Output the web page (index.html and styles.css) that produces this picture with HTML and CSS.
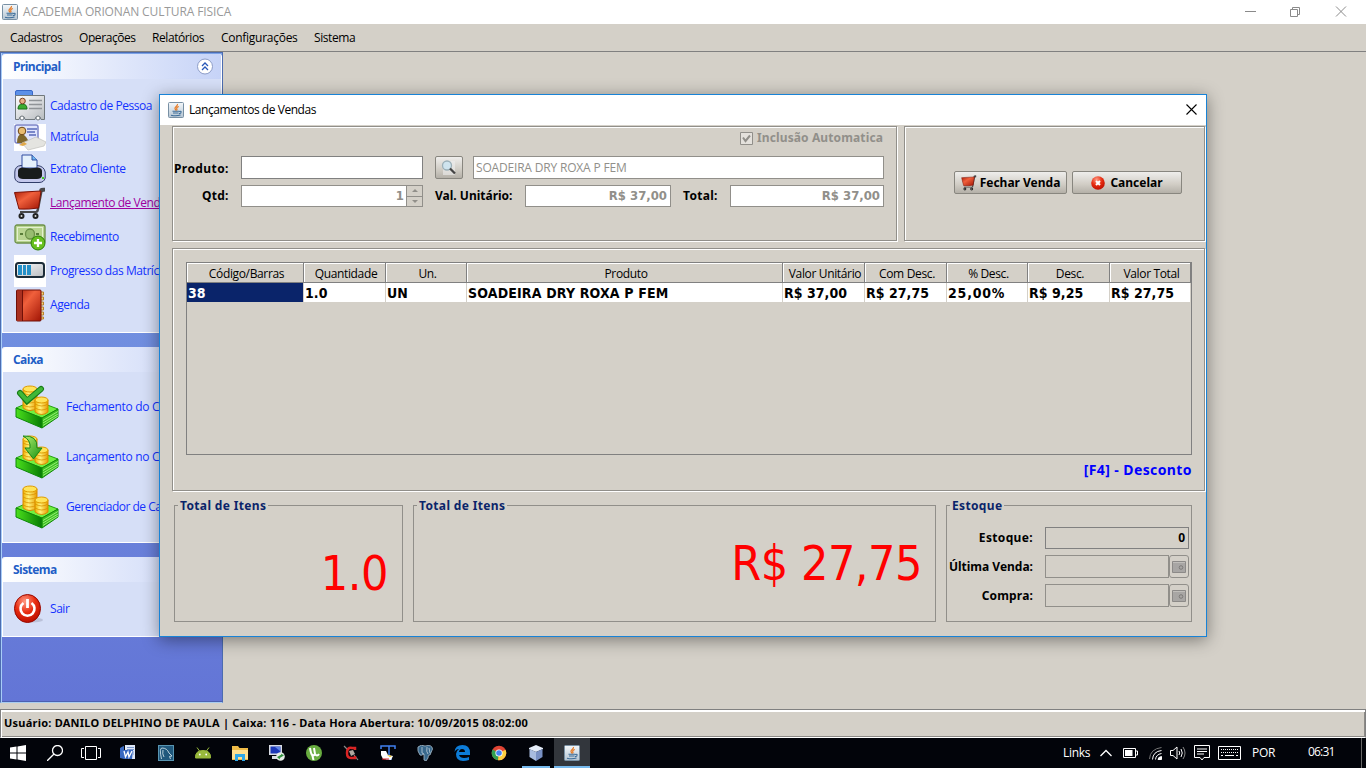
FILE: index.html
```html
<!DOCTYPE html>
<html lang="pt-BR">
<head>
<meta charset="utf-8">
<title>ACADEMIA ORIONAN CULTURA FISICA</title>
<link rel="stylesheet" href="styles.css">
</head>
<body>
<svg class="defs" width="0" height="0">
  <defs>
    <linearGradient id="gRed" x1="0" y1="0" x2="1" y2="1"><stop offset="0" stop-color="#a81c08"/><stop offset=".4" stop-color="#f0603c"/><stop offset="1" stop-color="#a01404"/></linearGradient>
    <linearGradient id="gGold" x1="0" x2="1"><stop offset="0" stop-color="#f0b000"/><stop offset=".4" stop-color="#fff27a"/><stop offset="1" stop-color="#e89a00"/></linearGradient>
    <linearGradient id="gGreen" x1="0" x2="1"><stop offset="0" stop-color="#4be01c"/><stop offset="1" stop-color="#067a04"/></linearGradient>
    <linearGradient id="gArrow" x1="0" y1="0" x2="1" y2="1"><stop offset="0" stop-color="#b4f070"/><stop offset="1" stop-color="#149010"/></linearGradient>
    <linearGradient id="gMetal" x1="0" y1="0" x2="1" y2="1"><stop offset="0" stop-color="#fdfdfd"/><stop offset="1" stop-color="#b8bcc0"/></linearGradient>
    <linearGradient id="gWhite" x1="0" y1="0" x2="0" y2="1"><stop offset="0" stop-color="#f4f8fb"/><stop offset="1" stop-color="#b4c4d2"/></linearGradient>
    <radialGradient id="gBall" cx=".4" cy=".25" r=".8"><stop offset="0" stop-color="#ff9a84"/><stop offset=".5" stop-color="#e82c10"/><stop offset="1" stop-color="#b80c00"/></radialGradient>
  </defs>
  <symbol id="java" viewBox="0 0 16 16">
    <rect x=".5" y=".5" width="15" height="15" rx="1" fill="url(#gWhite)" stroke="#7890a4"/>
    <path d="M9.500 2C10 4 6.500 4.800 7 6.500Q7.300 7.500 8 8.500M10.800 4.500Q8 5.500 8.800 6.700Q9.400 7.500 8.500 8.500" fill="none" stroke="#e87820" stroke-width="1.200"/>
    <path d="M4.500 9.200H11M5 11H10.500M3 13.200Q8 14.500 12.500 13M11 9.500Q14 8.800 12.800 11L11 11.700" fill="none" stroke="#3c6c98" stroke-width="1.100"/>
  </symbol>
  <symbol id="cart" viewBox="0 0 32 33">
    <path d="M25 7L25.500 2Q27 .3 31 .8V4.500L28.500 5L25 23Q24.500 26 22 26H6V24H22L23 21.500Z" fill="#48484a"/>
    <path d="M.5 5.500L27 4L24.500 21Q15 22.500 5 22Z" fill="url(#gRed)" stroke="#7c1004"/>
    <circle cx="7.500" cy="29" r="3" fill="#222"/><circle cx="21.500" cy="29" r="3" fill="#222"/>
    <circle cx="7.500" cy="29" r="1" fill="#ddd"/><circle cx="21.500" cy="29" r="1" fill="#ddd"/>
  </symbol>
  <symbol id="stack" viewBox="0 0 44 44">
    <path d="M1 23L19 15L43 24L27 33Z" fill="#70f040" stroke="#28a014"/>
    <path d="M1 23L27 33V43L1 32Z" fill="url(#gGreen)" stroke="#0c8808"/>
    <path d="M27 33L43 24V32L27 43Z" fill="#3cc020" stroke="#108808"/>
    <path d="M28 35.500L43 26.500M28 38L43 29M28 40.500L43 31" stroke="#a0f080" stroke-width=".9"/>
    <path d="M8 4V23Q15 28 22 23V4Z" fill="url(#gGold)" stroke="#d88c00"/>
    <path d="M8 8Q15 12 22 8M8 12Q15 16 22 12M8 16Q15 20 22 16M8 20Q15 24 22 20" fill="none" stroke="#d89000" stroke-width=".8"/>
    <ellipse cx="15" cy="4" rx="7" ry="3" fill="#ffe45a" stroke="#e09c00"/>
    <path d="M20 15V27Q27 32 33 27V15Z" fill="url(#gGold)" stroke="#d88c00"/>
    <path d="M20 19Q27 23 33 19M20 23Q27 27 33 23" fill="none" stroke="#d89000" stroke-width=".8"/>
    <ellipse cx="26.500" cy="15" rx="6.500" ry="3" fill="#ffe45a" stroke="#e09c00"/>
  </symbol>
</svg>

<div class="screen">
  <header class="titlebar">
    <svg class="i16"><use href="#java"/></svg>
    <span class="app-title">ACADEMIA ORIONAN CULTURA FISICA</span>
    <svg class="win-buttons" width="102" height="12" viewBox="0 0 102 12" fill="none" stroke="#8a8a8a"><path d="M0 5.500H11M45.500 3.500H52.500V10.500H45.500ZM47.500 3.500V1.500H54.500V8.500H52.500M91 .5L101 10.500M101 .5L91 10.500"/></svg>
  </header>
  <nav class="menubar">
    <span class="m1">Cadastros</span><span class="m2">Operações</span><span class="m3">Relatórios</span><span class="m4">Configurações</span><span class="m5">Sistema</span>
  </nav>

  <main class="desktop">
    <aside class="sidebar">
      <section class="group">
        <h2>Principal
          <svg width="18" height="18" viewBox="0 0 18 18"><circle cx="9" cy="8.500" r="7.500" fill="#fff" stroke="#8c9cc8"/><path d="M6 8L9 5L12 8M6 12L9 9L12 12" fill="none" stroke="#2858b8" stroke-width="1.300"/></svg>
        </h2>
        <div class="items">
          <a class="row r33"><svg width="32" height="32" viewBox="0 0 32 32"><path d="M1.500 7V2Q1.500 .5 3 .5H17Q18.500 .5 18.500 2V7Z" fill="#5c90e8" stroke="#3868c8"/><path d="M1.500 5.500H30.500V29.500H27A3 3 0 0 0 21 29.500H11A3 3 0 0 0 5 29.500H1.500Z" fill="url(#gMetal)" stroke="#70787c"/><path d="M4 19Q4 14 8.500 14Q13 14 13 19Z" fill="#3cac30" stroke="#187018"/><circle cx="8.500" cy="11" r="2.800" fill="#e8b088" stroke="#7c4020"/><path d="M15 10.500H28M15 14.500H28M15 18.500H28" stroke="#909498" stroke-width="1.300"/><circle cx="8" cy="28" r="2" fill="#fff" stroke="#70787c"/><circle cx="24" cy="28" r="2" fill="#fff" stroke="#70787c"/></svg><span>Cadastro de Pessoa</span></a>
          <a class="row r30"><svg width="32" height="27" viewBox="0 0 32 27"><path fill="#fff" d="M0 0H32V27H0Z"/><rect x="1" y="1" width="23" height="18" rx="2" fill="#dfe4fc" stroke="#7c84c8" stroke-width="1.500"/><path d="M13 5H23M13 8H21M15 11H22" stroke="#5868b8" stroke-width="1.300"/><path d="M3 19Q3 10 8 10Q13 12 15 19Z" fill="#80682c"/><circle cx="8" cy="7" r="3.800" fill="#e8bc70" stroke="#6c4414"/><path d="M8 19L22 13L32 18L30 22L14 26Z" fill="#e4e4e0" stroke="#c0c0bc" stroke-width=".7"/><path d="M5 21L10 18L13 20L9 22Z" fill="#e0a848"/></svg><span>Matrícula</span></a>
          <a class="row r34"><svg width="32" height="30" viewBox="0 0 32 30"><path d="M.8 18Q1 12 7 11.500H23Q30 12 31.200 18V24Q30 28.500 25 28.500H7Q2 28.500 .8 24Z" fill="#c4c8ec" stroke="#303c68"/><path d="M8 14V1H18L23 6V14Z" fill="#e4f0fc" stroke="#304ca0"/><path d="M18 1V6H23" fill="#70b8f0" stroke="#304ca0"/><path d="M4 17Q4 14 8 13.500Q16 15 24 13.500Q28 14 28 17V22Q27 25 23 25H9Q5 25 4 22Z" fill="#181c1c"/><rect x="28" y="23" width="2" height="2" fill="#40d020"/></svg><span>Extrato Cliente</span></a>
          <a class="row r34 visited"><svg width="32" height="33"><use href="#cart"/></svg><span>Lançamento de Vendas</span></a>
          <a class="row r34"><svg width="32" height="28" viewBox="0 0 32 28"><rect x="1" y="2" width="30" height="18" rx="2" fill="#b8d490" stroke="#6c9048" stroke-width="1.300"/><rect x="3.500" y="4.500" width="25" height="13" fill="none" stroke="#e4f0d0"/><ellipse cx="16" cy="11" rx="4.500" ry="5" fill="#98bc70" stroke="#6c9048" stroke-width="1.300"/><path d="M6 11H9M22 11H25" stroke="#587c38" stroke-width="2"/><circle cx="24" cy="20" r="7" fill="#68c020" stroke="#2c8008"/><path d="M24 16V24M20 20H28" stroke="#fff" stroke-width="2.300"/></svg><span>Recebimento</span></a>
          <a class="row r34"><svg width="32" height="32" viewBox="0 0 32 32"><path fill="#fff" d="M0 0H32V32H0Z"/><rect x="2" y="8" width="28" height="14" rx="2.500" fill="url(#gMetal)" stroke="#1c2c38" stroke-width="2"/><path d="M4 10H8V20H4ZM9 10H12V20H9ZM13 10H17V20H13Z" fill="#2490c8"/></svg><span>Progresso das Matrículas</span></a>
          <a class="row r34"><svg width="32" height="33" viewBox="0 0 32 33"><path d="M26 3H29.500V6H26M26 8H29.500V11H26M26 13H29.500V16H26M26 18H29.500V21H26M26 23H29.500V26H26M26 28H29.500V30H26" fill="#f0d080" stroke="#b8822c"/><rect x="2.500" y="1" width="24.500" height="31" rx="1" fill="url(#gRed)" stroke="#701008"/><path d="M3 1.500H8V31.500H3Z" fill="#a83020"/><path d="M8.500 1V32" stroke="#701008"/></svg><span>Agenda</span></a>
        </div>
      </section>
      <section class="group big">
        <h2>Caixa</h2>
        <div class="items">
          <a class="row r50"><svg width="44" height="44"><use href="#stack"/><path d="M5 8L12 16L26 4" fill="none" stroke="#187c18" stroke-width="6" stroke-linecap="round"/><path d="M5 8L12 15.500L26 4" fill="none" stroke="#40b838" stroke-width="4" stroke-linecap="round"/></svg><span>Fechamento do Caixa</span></a>
          <a class="row r50"><svg width="44" height="44"><use href="#stack"/><path d="M8 1Q23 0 22 13H27L18.500 24L10 13H15Q16 5 8 1Z" fill="url(#gArrow)" stroke="#188818"/></svg><span>Lançamento no Caixa</span></a>
          <a class="row r50"><svg width="44" height="44"><use href="#stack"/></svg><span class="tight">Gerenciador de Caixa</span></a>
        </div>
      </section>
      <section class="group last">
        <h2>Sistema</h2>
        <div class="items">
          <a class="row r34"><svg width="32" height="32" viewBox="0 0 32 32"><ellipse cx="18" cy="27" rx="11" ry="2.500" fill="#a8aec4" opacity=".6"/><ellipse cx="13.500" cy="15.500" rx="13" ry="14" fill="url(#gBall)" stroke="#980800"/><path d="M9.500 10A7 7 0 1 0 17.500 10" fill="none" stroke="#fff" stroke-width="2.600"/><path d="M13.500 6V15" stroke="#fff" stroke-width="2.800"/></svg><span>Sair</span></a>
        </div>
      </section>
    </aside>
  </main>

  <footer class="status"><span>Usuário: DANILO DELPHINO DE PAULA | Caixa: 116 - Data Hora Abertura: 10/09/2015 08:02:00</span></footer>

  <div class="taskbar">
    <div class="apps">
      <i><svg viewBox="0 0 16 16"><path fill="#fff" d="M0 2.500L6.500 1.500V7.500H0ZM7.500 1.400L16 0V7.500H7.500ZM0 8.500H6.500V14.500L0 13.500ZM7.500 8.500H16V16L7.500 14.600Z"/></svg></i>
      <i><svg viewBox="0 0 16 16" fill="none" stroke="#fff" stroke-width="1.300"><circle cx="10.500" cy="5.500" r="5"/><path d="M7 9L0 16"/></svg></i>
      <i class="view"><svg class="wide" viewBox="0 0 20 16" fill="none" stroke="#fff"><path d="M4.500 1.500H15.500V14.500H4.500ZM3 3.500H.5V12.500H3M17 3.500H19.500V12.500H17"/></svg></i>
      <i class="view"><svg viewBox="0 0 16 16"><path fill="#dfe8f8" d="M5 0H15V14H5Z"/><path d="M7 2.500H14M7 4.500H14M13 7H14M13 9H14" stroke="#7898d0"/><path fill="#3868c0" d="M0 3Q3 1 4 1V14L0 13ZM3 5H13L12 14H3Z"/><path d="M4 6L5.500 12L8 7L9 12L12 6" fill="none" stroke="#fff" stroke-width="1.300"/></svg></i>
      <i><svg viewBox="0 0 16 16"><rect x=".5" y=".5" width="15" height="15" fill="#20587c" stroke="#5894b0"/><path d="M3.500 14Q1 3 4 3Q9 3 11 8L14 11L11.500 11.500L12.500 14M5 5Q4 9 6 12" fill="none" stroke="#c8dce4" stroke-width=".9"/></svg></i>
      <i><svg viewBox="0 0 16 16"><path d="M.5 13Q0 5.500 8 5.500Q16 5.500 15.500 13ZM2 2.500L4.500 6M14 2.500L11.500 6" fill="#98b83c" stroke="#98b83c"/><circle cx="4.800" cy="9.500" r=".9" fill="#fff"/><circle cx="11.200" cy="9.500" r=".9" fill="#fff"/></svg></i>
      <i><svg viewBox="0 0 16 16"><path fill="#f0bc48" d="M0 1H6L7.500 3H16V15H0Z"/><path fill="#ffe090" d="M0 5H16V14H0Z"/><path fill="#30a8e8" d="M3 16V9H13V16H10V12H6V16Z"/></svg></i>
      <i><svg viewBox="0 0 16 16"><path fill="#d8dce4" d="M0 0H13V10H0ZM3 11H10V14H3Z"/><path fill="#1c38b8" d="M1.500 1.500H11.500V8.500H1.500Z"/><path d="M6 2H11V6Z" fill="#5c84e8"/><circle cx="11.500" cy="11.500" r="4.300" fill="#e8ece8"/><path d="M8.500 12.500L11 11L10 14M14.500 10L12 11.500L13 9" fill="none" stroke="#30943c" stroke-width="1.200"/></svg></i>
      <i><svg viewBox="0 0 16 16"><circle cx="8" cy="8" r="8" fill="#68ac40"/><path d="M4 3Q5 9 6 10Q8 11 9 9L8 3M9 9Q11 12 13 9M6 9L7.500 15" fill="none" stroke="#fff" stroke-width="2"/></svg></i>
      <i><svg viewBox="0 0 16 16"><path d="M1 1L5 5M11 10L15 15" stroke="#888" stroke-width="1.200"/><path d="M6 6L10 5L12 9L8 11Z" fill="#b0a8a0"/><path d="M12 5V3H9Q4 2 4 8Q4 13 8 13H12V11" fill="none" stroke="#d82424" stroke-width="2.500"/></svg></i>
      <i><svg viewBox="0 0 16 16"><path d="M1 4V1H15V4M9 1V13M6 14H12" fill="none" stroke="#4080f0" stroke-width="1.500"/><path d="M1 6L6 6L8 10L13 11L11 15L3 14L1 10Z" fill="#fff"/><path d="M7 10L12 11L10 12Z" fill="#f0c000"/><path d="M2 14L9 14" stroke="#e02020"/></svg></i>
      <i><svg viewBox="0 0 16 16"><path d="M1 2Q4 -1 8 1Q15 -1 15.500 4L13 10Q11 9 11 13L9 16L7 15V9Q4 11 3 10Q0 6 1 2Z" fill="#38688c" stroke="#a8bccc" stroke-width=".8"/><path d="M5 2V8L7 9M10 2Q9 7 11 9M12 3L13 8" fill="none" stroke="#c0d0dc" stroke-width=".8"/></svg></i>
      <i><svg viewBox="0 0 16 16"><path fill="#0c7cd8" d="M.5 7Q1 0 8.500 0Q16 0 16 8V10H5Q6 13 10 13Q13 13 15 12V15Q12 16 9 16Q2 16 2 9Q2 6 5 4Q2 4 .5 7ZM5 7H11Q11 4 8 4Q5.500 4 5 7Z"/></svg></i>
      <i><svg viewBox="0 0 16 16"><circle cx="8" cy="8" r="7.300" fill="#e04434"/><path d="M8 8L1.500 4.500A7.300 7.300 0 0 0 7 15.200Z" fill="#30a050"/><path d="M8 8L14.500 4.800A7.300 7.300 0 0 1 7 15.200Z" fill="#fcd040"/><circle cx="8" cy="8" r="3.600" fill="#fff"/><circle cx="8" cy="8" r="2.800" fill="#4484f0"/></svg></i>
      <i class="open"><svg viewBox="0 0 16 16"><path fill="#e4ecf8" d="M8 0L15 3V4L8 7L1 4V3Z"/><path fill="#a8bce0" d="M1.500 4L8 7V16L1.500 12Z"/><path fill="#7890c4" d="M14.500 4L8 7V16L14.500 12Z"/></svg></i>
      <i class="open active"><svg><use href="#java"/></svg></i>
    </div>
    <div class="tray">
      <span class="links">Links</span>
      <svg class="t-up" width="12" height="8" fill="none" stroke="#fff" stroke-width="1.300"><path d="M.5 7L6 1.500L11.500 7"/></svg>
      <svg class="t-bat" width="15" height="10"><path d="M.5 .5H12.500V9.500H.5ZM13 3H14.500V7H13" fill="none" stroke="#fff"/><path d="M2 2H9.500V8H2Z" fill="#fff"/></svg>
      <svg class="t-wifi" width="13" height="13" fill="none" stroke="#fff"><path d="M.5 12Q1 2 12.500 .5" stroke="#777"/><path d="M3.500 12.500Q4 4.500 12.500 3.500M6.500 12.500Q7 7.500 12.500 6.500"/><path d="M9 12.500Q9 10 12.500 9.500V12.500Z" fill="#fff"/></svg>
      <svg class="t-snd" width="16" height="14" fill="none" stroke="#fff"><path d="M.5 4.500H3L7 1V13L3 9.500H.5Z"/><path d="M9 5Q10.500 7 9 9M11 3Q13.500 7 11 11"/><path d="M13 1Q17 7 13 13" stroke="#888"/></svg>
      <svg class="t-msg" width="16" height="16" fill="none" stroke="#fff"><path d="M.5 .5H15.500V12.500H10L8 15L6 12.500H.5ZM3 4H13M3 6.500H13M3 9H10"/></svg>
      <svg class="t-kbd" width="23" height="14" fill="none" stroke="#fff"><path d="M.5 .5H22.500V13.500H.5Z"/><path d="M3 3.500H20M3 6.500H20" stroke-dasharray="1 1"/><path d="M3 9.500H5M7 9.500H16M18 9.500H20"/></svg>
      <span class="lang">POR</span>
      <span class="clock">06:31</span>
    </div>
  </div>

  <section class="dialog">
    <div class="dlg-title">
      <svg class="i16"><use href="#java"/></svg><span>Lançamentos de Vendas</span>
      <svg class="dlg-x" width="11" height="11"><path d="M.5 .5L10.500 10.500M10.500 .5L.5 10.500" stroke="#000" stroke-width="1.100"/></svg>
    </div>
    <div class="dlg-body">
      <div class="top">
        <div class="etched form">
          <div class="auto"><svg width="13" height="13"><path d="M.5 .5H12.500V12.500H.5Z" fill="#e4e1dc" stroke="#918f8a"/><path d="M3 5.500L5.500 9L10 3.500" fill="none" stroke="#918f8a" stroke-width="2"/></svg><span>Inclusão Automatica</span></div>
          <div class="line l1">
            <label class="w-prod">Produto:</label>
            <div class="field black"></div>
            <div class="btn look"><svg width="18" height="18" viewBox="0 0 18 18"><path d="M3 2H15V16H3Z" fill="#eee" opacity=".6"/><circle cx="7" cy="6.500" r="4.500" fill="#cfe4ee" stroke="#9cb0b8" stroke-width="1.300"/><path d="M10 9.500L15 14.500" stroke="#444" stroke-width="2.300"/></svg></div>
            <div class="field name"><span>SOADEIRA DRY ROXA P FEM</span></div>
          </div>
          <div class="line l2">
            <label class="w-qtd">Qtd:</label>
            <div class="field num spin"><span>1</span><div class="arrows"><b class="up"></b><b class="down"></b></div></div>
            <label class="w-val">Val. Unitário:</label>
            <div class="field num f-val"><span>R$ 37,00</span></div>
            <label class="w-tot">Total:</label>
            <div class="field num f-tot"><span>R$ 37,00</span></div>
          </div>
        </div>
        <div class="etched actions">
          <div class="btn b1"><svg width="16" height="16" viewBox="0 0 32 33"><use href="#cart"/></svg><span>Fechar Venda</span></div>
          <div class="btn b2"><svg width="14" height="14"><circle cx="7" cy="7" r="6.800" fill="url(#gBall)"/><path d="M5 5L9 9M9 5L5 9" stroke="#fff" stroke-width="2"/></svg><span>Cancelar</span></div>
        </div>
      </div>
      <div class="etched list">
        <div class="table">
          <div class="cols head"><span>Código/Barras</span><span>Quantidade</span><span>Un.</span><span>Produto</span><span>Valor Unitário</span><span>Com Desc.</span><span>% Desc.</span><span>Desc.</span><span>Valor Total</span></div>
          <div class="cols data"><span class="sel">38</span><span>1.0</span><span>UN</span><span class="prod">SOADEIRA DRY ROXA P FEM</span><span>R$ 37,00</span><span>R$ 27,75</span><span class="pct">25,00%</span><span>R$ 9,25</span><span>R$ 27,75</span></div>
        </div>
        <div class="hint"><span>[F4] - Desconto</span></div>
      </div>
      <div class="bottom">
        <div class="titled t1"><h3>Total de Itens</h3><span class="huge">1.0</span></div>
        <div class="titled t2"><h3>Total de Itens</h3><span class="huge money">R$ 27,75</span></div>
        <div class="titled t3"><h3>Estoque</h3>
          <div class="stock s1"><label class="e1">Estoque:</label><div class="sf full">0</div></div>
          <div class="stock s2"><label class="e2">Última Venda:</label><div class="sf"></div><div class="cal"><svg width="14" height="12"><path d="M.5 .5H13.500V11.500H.5Z" fill="#a8a6a4" stroke="#8c8a88"/><path d="M1 1.500H13" stroke="#c0beba"/><circle cx="9" cy="6.500" r="1.800" fill="none" stroke="#7c7a78"/></svg></div></div>
          <div class="stock s3"><label class="e3">Compra:</label><div class="sf"></div><div class="cal"><svg width="14" height="12"><path d="M.5 .5H13.500V11.500H.5Z" fill="#a8a6a4" stroke="#8c8a88"/><path d="M1 1.500H13" stroke="#c0beba"/><circle cx="9" cy="6.500" r="1.800" fill="none" stroke="#7c7a78"/></svg></div></div>
        </div>
      </div>
    </div>
  </section>
</div>
</body>
</html>
```
FILE: styles.css
```css
* { box-sizing: border-box; }
body { margin: 0; overflow: hidden; font: 12px/16px "Open Sans", "Noto Sans", sans-serif; color: #000; background: #d4d0c8; }
svg { display: block; flex: none; }
.defs { position: absolute; }
.i16 { width: 16px; height: 16px; }
.screen { position: relative; width: 1366px; height: 768px; overflow: hidden; display: flex; flex-direction: column; white-space: nowrap; }

.titlebar { height: 24px; background: #fff; display: flex; align-items: center; padding: 0 19px 1px 2px; color: #999; }
.app-title { margin-left: 5px; letter-spacing: -.12px; }
.win-buttons { margin-left: auto; }
.menubar { height: 28px; border-bottom: 1px solid #808080; display: flex; align-items: center; padding-left: 10px; letter-spacing: -.42px; }
.m1 { width: 69px; } .m2 { width: 73px; } .m3 { width: 69px; } .m4 { width: 93px; letter-spacing: -.27px; }

.desktop { height: 657px; }
.sidebar { width: 223px; height: 651px; border: 1px solid #4c6cb0; border-bottom-color: #a8ccf0; padding: 1px 0 0 0; background: linear-gradient(#7ba2e7, #6375d6); box-shadow: inset 1px 0 #a8ccf8, inset 0 -1px #4c60b0; }
.group { margin: 0 0 14px 1px; background: #d6dff7; border: solid #fff; border-width: 0 1px 1px; border-radius: 3px 3px 0 0; }
.group h2 { margin: 0; height: 25px; padding: 0 7px 0 10px; display: flex; align-items: center; justify-content: space-between; font-size: 12px; font-weight: 700; color: #215dc6; letter-spacing: -.6px; background: linear-gradient(90deg, #fff, #c6d3f7); border-radius: 3px 3px 0 0; }
.big h2, .last h2 { letter-spacing: -.55px; }
.items { padding: 10px 0 10px 11px; color: #1432ff; }
.row { display: flex; align-items: center; }
.row span { margin-left: 4px; letter-spacing: -.44px; }
.r30 { height: 30px; } .r33 { height: 33px; } .r34 { height: 34px; } .r50 { height: 50px; }
.visited { color: #a000a0; text-decoration: underline; }
.big .items { padding-left: 12px; }
.big .row span { margin-left: 7px; letter-spacing: -.3px; }
.big .row .tight { letter-spacing: -.5px; }

.status { height: 29px; border: 1px solid #808080; box-shadow: inset 1px 2px #fff, inset -1px -1px #8c8a86; border-bottom-color: #fff; padding-left: 3px; font: 700 11px/26px "Noto Sans", sans-serif; letter-spacing: .23px; }

.taskbar { height: 30px; background: #02040a; display: flex; color: #fff; }
.apps { display: flex; margin-left: -1px; }
.apps i { width: 37px; height: 30px; display: flex; align-items: center; justify-content: center; }
.apps .view { padding-right: 2px; }
.apps svg { width: 16px; height: 16px; }
.apps svg.wide { width: 20px; }
.apps .open { background: linear-gradient(#76b9ed, #76b9ed) 50% 100% / 28px 2px no-repeat; }
.apps .active { width: 36px; background: linear-gradient(#76b9ed, #76b9ed) 50% 100% / 36px 2px no-repeat, #32363c; }
.tray { margin-left: auto; width: 299px; display: flex; align-items: center; border-right: 1px solid #666; margin-right: 4px; }
.links { width: 37px; letter-spacing: -.3px; }
.t-up { margin-right: 11px; } .t-bat { margin-right: 11px; } .t-wifi { margin-right: 8px; } .t-snd { margin-right: 8px; } .t-msg { margin-right: 8px; } .t-kbd { margin-right: 11px; }
.lang { width: 56px; letter-spacing: -.3px; }
.clock { letter-spacing: -.8px; padding-bottom: 2px; }

.dialog { position: absolute; left: 159px; top: 94px; width: 1048px; height: 543px; background: #d4d0c8; border: 1px solid #1883d7; box-shadow: 0 3px 16px rgba(0, 0, 0, .42); }
.dlg-title { height: 30px; background: #fff; display: flex; align-items: center; padding: 0 9px 1px 8px; }
.dlg-title span { margin-left: 5px; letter-spacing: -.45px; }
.dlg-x { margin-left: auto; }
.dlg-body { padding: 1px 0 0 12px; }
.etched { border: 1px solid #918f8a; box-shadow: inset 1px 1px #fff, 1px 1px #fff; }
.top { display: flex; gap: 7px; height: 115px; }
.form { width: 725px; padding: 4px 0 0 1px; font: 700 12px/16px "Noto Sans", sans-serif; }
.auto { display: flex; align-items: center; height: 14px; color: #918f8a; padding-left: 566px; gap: 4px; letter-spacing: .12px; }
.line { display: flex; align-items: center; }
.line label { position: relative; top: 1px; }
.l1 { margin-top: 11px; height: 23px; }
.l2 { margin-top: 6px; height: 22px; }
.l2 label { top: 0; }
.field { height: 23px; border: 1px solid #918f8a; background: #fff; color: #918f8a; line-height: 20px; }
.field.black { width: 182px; border-color: #808080; }
.w-prod { width: 67px; letter-spacing: .42px; }
.w-qtd { width: 67px; padding-left: 28px; letter-spacing: .25px; }
.btn { height: 23px; border: 1px solid #88867f; border-radius: 2px; background: linear-gradient(#efeeec, #d0ccc4 60%, #b4b0a8); display: flex; align-items: center; justify-content: center; font: 700 12px/16px "Noto Sans", sans-serif; }
.look { width: 28px; margin: 0 10px 0 12px; }
.name { width: 411px; font: 12px/21px "Open Sans", sans-serif; padding-left: 2px; letter-spacing: -.18px; }
.num { height: 22px; font: 700 13px/20px "DejaVu Sans Condensed", "DejaVu Sans", sans-serif; text-align: right; padding-right: 3px; }
.spin { width: 182px; display: flex; justify-content: flex-end; padding: 0; }
.arrows { width: 16px; margin-left: 2px; border-left: 1px solid #918f8a; background: #d4d0c8; display: flex; flex-direction: column; }
.arrows b { flex: 1; display: flex; align-items: center; justify-content: center; }
.arrows b + b { border-top: 1px solid #918f8a; }
.arrows b::after { content: ""; border: 3px solid transparent; }
.arrows .up::after { border-width: 0 3px 3px; border-bottom-color: #918f8a; }
.arrows .down::after { border-width: 3px 3px 0; border-top-color: #918f8a; }
.w-val { width: 90px; margin-left: 12px; }
.f-val { width: 146px; }
.w-tot { width: 47px; margin-left: 12px; letter-spacing: .3px; }
.f-tot { width: 154px; }
.actions { width: 301px; display: flex; padding: 44px 0 0 49px; gap: 5px; }
.b1 { width: 113px; gap: 3px; } .b2 { width: 110px; gap: 5px; }

.list { width: 1033px; height: 243px; margin-top: 7px; padding: 13px 0 0 13px; }
.table { width: 1006px; height: 193px; border: 1px solid #808080; }
.cols { display: grid; grid-template-columns: 117px 82px 81px 316px 82px 82px 81px 82px 81px; }
.head span { height: 20px; text-align: center; line-height: 21px; padding-left: 3px; border: 1px solid #808080; border-width: 0 1px 1px 0; box-shadow: inset 1px 1px #fff; letter-spacing: -.35px; }
.data span { height: 19px; background: #fff; border-right: 1px solid #d4d0c8; padding-left: 1px; font: 700 14px/20px "DejaVu Sans Condensed", "DejaVu Sans", sans-serif; letter-spacing: .05px; }
.data .sel { background: #0a246a; color: #fff; }
.data .prod { letter-spacing: .16px; }
.data .pct { letter-spacing: .8px; }
.hint { padding: 6px 12px 0 0; text-align: right; color: #0000ff; font: 700 14px/18px "Noto Sans", sans-serif; letter-spacing: .4px; }

.bottom { display: flex; padding: 14px 0 0 2px; }
.titled { position: relative; height: 117px; border: 1px solid #918f8a; font: 700 12px/16px "Noto Sans", sans-serif; }
.titled h3 { position: absolute; left: 3px; top: -8px; margin: 0; padding: 0 2px; background: #d4d0c8; color: #0a246a; font: inherit; line-height: 16px; letter-spacing: .35px; }
.t1 { width: 229px; margin-right: 10px; } .t2 { width: 523px; margin-right: 10px; } .t3 { width: 246px; padding-top: 20px; }
.huge { display: block; text-align: right; color: #f00; font: 48px/56px "DejaVu Sans Condensed", "DejaVu Sans", sans-serif; letter-spacing: -.5px; padding: 39px 14px 0 0; }
.money { padding: 29px 13px 0 0; }
.stock { display: flex; height: 23px; margin-bottom: 6px; align-items: center; }
.stock label { width: 98px; padding-right: 12px; display: flex; justify-content: flex-end; }
.stock .e1 { letter-spacing: .35px; }
.stock .e3 { letter-spacing: .15px; }
.sf { width: 124px; height: 23px; border: 1px solid #918f8a; }
.full { width: 144px; height: 22px; border-color: #808080; text-align: right; padding-right: 3px; line-height: 20px; }
.cal { width: 20px; height: 23px; border: 1px solid #918f8a; border-radius: 3px; display: flex; align-items: center; justify-content: center; }
```
